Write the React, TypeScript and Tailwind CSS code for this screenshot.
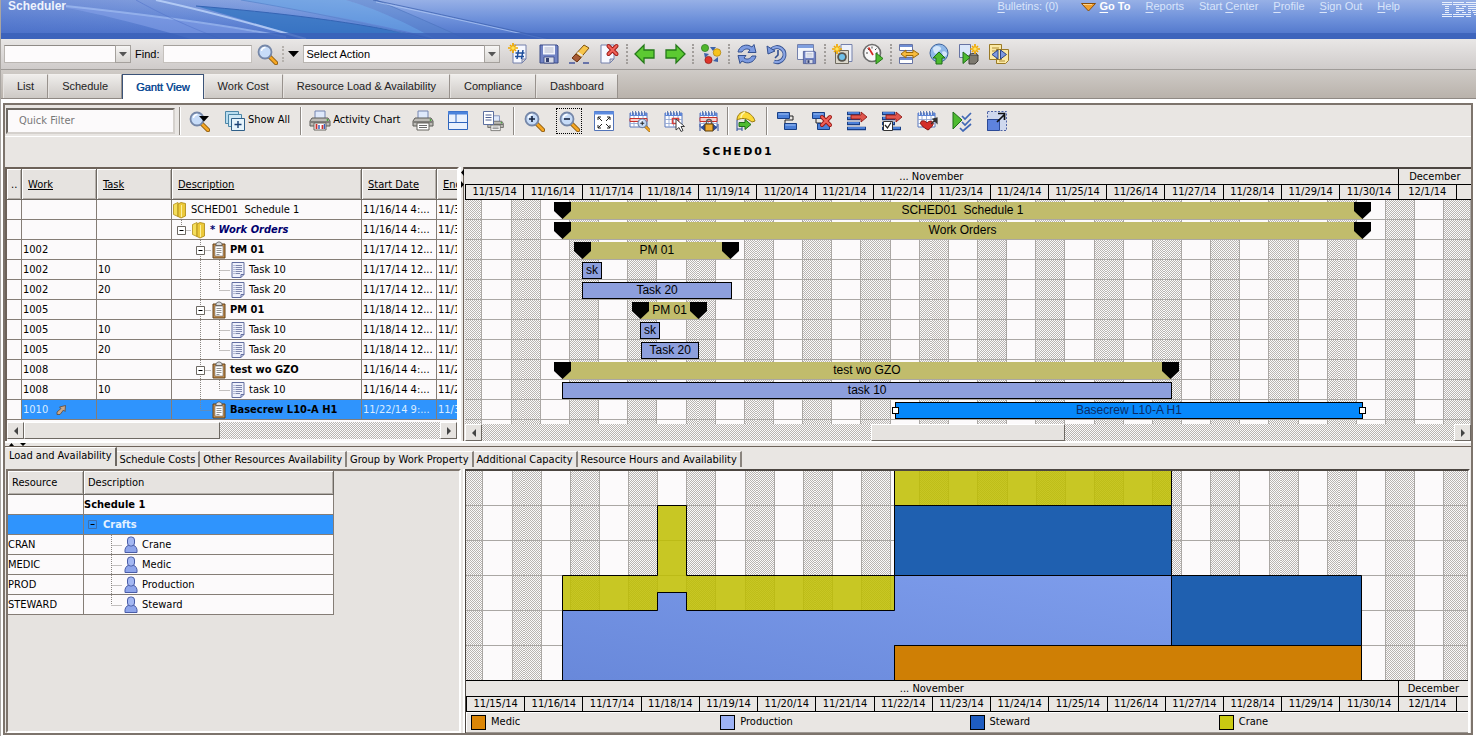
import type { ReactNode } from 'react'

const ui = "font-['DejaVu_Sans_Condensed','DejaVu_Sans',sans-serif]"
const arial = "font-['Liberation_Sans',Arial,sans-serif]"
const hatch = 'bg-[conic-gradient(#b9b5b1_25%,#fbfafb_0_50%,#b9b5b1_0_75%,#fbfafb_0)] bg-[length:2px_2px]'

/* ---------- icon parts ---------- */

const Lens = ({ x = 0, y = 0 }: { x?: number; y?: number }) => (
  <g transform={`translate(${x} ${y})`}>
    <path d="M12 12l7 7" stroke="#8a5a10" strokeWidth="4.5" strokeLinecap="round" />
    <path d="M13 13l6 6" stroke="#f5a623" strokeWidth="2.6" strokeLinecap="round" />
    <circle cx="8" cy="8" r="6.5" fill="#c7dcf8" stroke="#7587a8" strokeWidth="1.8" />
    <path d="M4.500 7a4 4 0 0 1 4-3.500" stroke="#fff" strokeWidth="1.3" fill="none" />
  </g>
)

const Page = ({ x = 5, y = 2, w = 13, h = 18 }: { x?: number; y?: number; w?: number; h?: number }) => (
  <path
    d={`M${x} ${y}h${w}v${h - 4}l-4 4h${-(w - 4)}z M${x + w} ${y + h - 4}h-4v4`}
    fill="#f6f8ff"
    stroke="#7480ab"
  />
)

const Spark = ({ x, y }: { x: number; y: number }) => (
  <g transform={`translate(${x} ${y})`}>
    <path d="M0-5v10M-5 0h10M-3-3l6 6M3-3l-6 6" stroke="#f0a800" strokeWidth="1.7" />
    <circle r="1.800" fill="#ffe45c" />
  </g>
)

const Floppy = () => (
  <>
    <path d="M2 2h17l1 1v17H2z" fill="#7183c4" stroke="#3b4a86" />
    <path d="M5 2.500h12v9H5z" fill="#f4f6fd" />
    <path d="M6.500 5h9M6.500 7h9M6.500 9h9" stroke="#b4b9cc" />
    <path d="M6 14h10v6H6z" fill="#d8dbe6" stroke="#3b4a86" strokeWidth=".8" />
    <path d="M8 15h3v4H8z" fill="#33406f" />
  </>
)

const Cal = () => (
  <>
    <path d="M2 3h17v14H2z" fill="#fff" stroke="#5b79bd" />
    <path d="M2 3h17v3H2z" fill="#5e86d8" />
    <path d="M4 1v4M7 1v4M10 1v4M13 1v4M16 1v4" stroke="#fff" strokeWidth="1.500" />
    <path d="M4.500 1v4M7.500 1v4M10.500 1v4M13.500 1v4M16.500 1v4" stroke="#3f5f9f" strokeWidth=".8" />
    <path d="M2 9.500h17M2 13.500h17M6 6v11M10.500 6v11M15 6v11" stroke="#94a8d4" strokeWidth=".9" />
  </>
)

const Printer = ({ tray }: { tray?: ReactNode }) => (
  <>
    <path d="M6 1h10v8H6z" fill="#dfe9fb" stroke="#7585b0" />
    <path d="M3 8h16l2 3v5H1v-5z" fill="#bdbbb6" stroke="#5d5c59" />
    <path d="M1.500 12h19" stroke="#6c6b67" strokeWidth="1.500" />
    <circle cx="18.500" cy="10" r=".9" fill="#3faa32" />
    <path d="M5 13h12v7H5z" fill="#fff" stroke="#66645f" />
    {tray ?? <path d="M7 15.500h8M7 17.500h8" stroke="#6b6b6b" />}
  </>
)

const RedX = ({ x, y }: { x: number; y: number }) => (
  <g transform={`translate(${x} ${y})`} strokeLinecap="round">
    <path d="M-4-4l8 8M4-4l-8 8" stroke="#9c1712" strokeWidth="4" />
    <path d="M-4-4l8 8M4-4l-8 8" stroke="#f0625a" strokeWidth="2.200" />
  </g>
)

const Bars = () => (
  <>
    <path d="M1 3.500h13M1 8.500h13M1 13.500h13M1 18.500h19" stroke="#183f85" strokeWidth="3.600" />
    <path d="M2 3h11M2 8h11M2 13h11M2 18h17" stroke="#4b80d8" strokeWidth="1.800" />
  </>
)

const RedArrow = () => (
  <path d="M5 5h10V2l6 5-6 5V9H5z" fill="#e0564d" stroke="#8e1a16" strokeWidth=".9" />
)

const icons: Record<string, ReactNode> = {
  search: <Lens x={1} y={1} />,
  newRecord: (
    <>
      <Page x={5} />
      <path d="M10.500 7l-1.500 9M15 7l-1.500 9M7.500 10h9M7 13.500h9" stroke="#1d4e9c" strokeWidth="1.500" />
      <Spark x={5} y={5} />
    </>
  ),
  save: <Floppy />,
  clear: (
    <>
      <path d="M1 20h6M15 20h6" stroke="#44549c" strokeWidth="1.500" />
      <path d="M5 14L16 2l5 3L10 18z" fill="#f7c54a" stroke="#7d5312" />
      <path d="M8 11l5 3.500-4 4.500-5-4z" fill="#a75b35" stroke="#6b3113" />
      <path d="M9.500 9.500l5 3.500" stroke="#e9e6e2" strokeWidth="2" />
    </>
  ),
  remove: (
    <>
      <Page x={3} />
      <RedX x={14.5} y={7} />
    </>
  ),
  prev: <path d="M1 11l9-9v5h10v8H10v5z" fill="#5cc932" stroke="#25791a" strokeWidth="1.300" />,
  next: <path d="M21 11l-9-9v5H2v8h10v5z" fill="#5cc932" stroke="#25791a" strokeWidth="1.300" />,
  workflow: (
    <>
      <path d="M10 4h6l-3 4zM4 10l5 1-4 4zM13 18l5-4v5z" fill="#3d62a8" />
      <circle cx="5" cy="5" r="3.600" fill="#50b52c" stroke="#2a7a1c" strokeWidth=".7" />
      <circle cx="17" cy="9.500" r="3.800" fill="#f6c21c" stroke="#a97e0a" strokeWidth=".7" />
      <circle cx="8.500" cy="17" r="3.600" fill="#dd352b" stroke="#8d1611" strokeWidth=".7" />
    </>
  ),
  refresh: (
    <>
      <path d="M2 9C3 4 8 1 13 2.500l3 1.500 2-2.500 2 8h-8l2-2.500c-3-2-6-1-8 2z" fill="#7d9be0" stroke="#34508f" />
      <path d="M20 13c-1 5-6 8-11 6.500L6 18l-2 2.500-2-8h8L8 15c3 2 6 1 8-2z" fill="#7d9be0" stroke="#34508f" />
    </>
  ),
  history: (
    <>
      <path d="M5.500 6.500A7.500 7.500 0 1 1 8 18.500" fill="none" stroke="#34508f" strokeWidth="4" />
      <path d="M5.500 6.500A7.500 7.500 0 1 1 8 18.500" fill="none" stroke="#8aa5e4" strokeWidth="2.200" />
      <path d="M1 3l1 8 7-3z" fill="#7d9be0" stroke="#34508f" />
      <path d="M12 7v5l-3 3" fill="none" stroke="#34508f" strokeWidth="1.600" />
    </>
  ),
  saveQuery: (
    <>
      <path d="M1.500 1.500h16v15h-16z" fill="#f2f5fc" stroke="#7480ab" />
      <path d="M2 2h15v3H2z" fill="#7f9fdf" />
      <g transform="translate(6 7) scale(.68)">
        <Floppy />
      </g>
    </>
  ),
  camera: (
    <>
      <path d="M9 1.500h11v17H9z" fill="#eef1fa" stroke="#7480ab" />
      <path d="M3.500 7.500h13v13h-13z" fill="#dcd8cc" stroke="#6f6b60" />
      <circle cx="10" cy="14" r="4.800" fill="#55534d" />
      <circle cx="10" cy="14" r="3" fill="#6fc1ea" />
      <Spark x={5} y={6} />
    </>
  ),
  gauge: (
    <>
      <circle cx="10" cy="10" r="8.500" fill="#f8f8f8" stroke="#6d6d6d" strokeWidth="1.700" />
      <path d="M4 10h2M10 3.500v2M14 10h2M5.500 5.500L7 7M14.500 5.500L13 7" stroke="#444" />
      <path d="M6.500 4.500L11 12" stroke="#d02a22" strokeWidth="1.700" />
      <path d="M14 10l7 5.500-7 5.500z" fill="#4ebb30" stroke="#25791a" />
    </>
  ),
  route: (
    <>
      <path d="M1.500 1.500h13v6h-13zM1.500 14.500h13v6h-13z" fill="#fff" stroke="#6673a3" />
      <path d="M2 3h12M2 16h12" stroke="#6f8ed4" strokeWidth="2" />
      <path d="M3 11l5-4v2.500h7V7l6 4-6 4v-2.500H8V15z" fill="#f8bb3c" stroke="#9c6a0a" />
    </>
  ),
  globe: (
    <>
      <circle cx="11" cy="10" r="9" fill="#8fb8e8" stroke="#3d639d" />
      <path d="M5 5c3-3 7-2 8 0s-3 3-4 5-4 0-4-5zM14 9c2-2 5 0 5 2s-3 3-4 2z" fill="#d5e7fa" />
      <path d="M11 9l6 6h-3v6H8v-6H5z" fill="#4ebb30" stroke="#1f6f18" />
    </>
  ),
  newAsset: (
    <>
      <path d="M1.500 1.500h11v13h-11z" fill="#dbe7fa" stroke="#6673a3" />
      <path d="M11 12h9v6l-3 3h-6z" fill="#7d7970" stroke="#45423c" />
      <path d="M12 11l6-1 2 3" fill="none" stroke="#45423c" />
      <path d="M5 9l7 5.500-7 6z" fill="#4ebb30" stroke="#1f6f18" />
      <Spark x={17} y={6} />
    </>
  ),
  compare: (
    <>
      <path d="M1.500 1.500h12v15h-12zM8.500 6.500h12v11l-3 3h-9z" fill="#fbe9a4" stroke="#9a7a26" />
      <path d="M4 5h7M4 8h4M11 18h6" stroke="#b18f37" />
      <path d="M10 7v9l-6-4.500zM12.500 7v9l6-4.500z" fill="#7f9be0" stroke="#2c4687" />
    </>
  ),
  filter: (
    <>
      <Lens x={1} y={1} />
      <path d="M11 6h10l-5 5.500z" fill="#000" />
    </>
  ),
  showAll: (
    <>
      <path d="M1.500 1.500h13v12h-13z" fill="#b8dcee" stroke="#4c87a8" />
      <path d="M4.500 4.500h13v12h-13z" fill="#cfe8f5" stroke="#4c87a8" />
      <path d="M7.500 8.500h13v12h-13z" fill="#e5f3fb" stroke="#2f5f88" />
      <path d="M14 11v7M10.500 14.500h7" stroke="#173f74" strokeWidth="1.400" />
    </>
  ),
  activity: (
    <Printer
      tray={
        <>
          <path d="M7.500 14v5M13.500 15v4" stroke="#d0302a" strokeWidth="1.800" />
          <path d="M10 15v4M15.500 14v5" stroke="#3d62b8" strokeWidth="1.500" />
        </>
      }
    />
  ),
  print: <Printer />,
  layout: (
    <>
      <path d="M1.500 1.500h19v18h-19z" fill="#e9f1fd" stroke="#2f65bd" />
      <path d="M1 3h20" stroke="#4a83dc" strokeWidth="3" />
      <path d="M9 4v8M2 12.500h19" stroke="#2f65bd" />
    </>
  ),
  printAll: (
    <>
      <g transform="translate(5 5) scale(.78)">
        <Printer />
      </g>
      <path d="M1.500 1.500h10v13h-10z" fill="#fff" stroke="#5c6f9f" />
      <path d="M3.500 5h6M3.500 7.500h6M3.500 10h6" stroke="#4d5f92" />
    </>
  ),
  zoomIn: (
    <>
      <Lens x={1} y={1} />
      <path d="M9 6v6M6 9h6" stroke="#16243f" strokeWidth="1.600" />
    </>
  ),
  zoomOut: (
    <>
      <Lens x={1} y={1} />
      <path d="M6 9h6" stroke="#16243f" strokeWidth="1.600" />
    </>
  ),
  fit: (
    <>
      <path d="M1.500 1.500h19v19h-19z" fill="#fff" stroke="#5274b9" />
      <path d="M1 3h20" stroke="#5c8be0" strokeWidth="3" />
      <path d="M5 10V7h3M5 7l4 4M17 10V7h-3M17 7l-4 4M5 15v3h3M5 18l4-4M17 15v3h-3M17 18l-4-4" fill="none" stroke="#222" />
    </>
  ),
  calZoom: (
    <>
      <Cal />
      <path d="M2 8.500h17v3H2z" fill="#f6cfcb" stroke="#c7302a" />
      <g transform="translate(9 8) scale(.66)">
        <Lens />
        <path d="M8 5v6M5 8h6" stroke="#222" strokeWidth="1.500" />
      </g>
    </>
  ),
  calPointer: (
    <>
      <Cal />
      <path d="M9.500 8.500h6v5h-6z" fill="none" stroke="#d8403a" strokeWidth="1.600" />
      <path d="M13 9v11l3-2.500 2 4 2-1-2-4h3.500z" fill="#fff" stroke="#3d3d3d" />
    </>
  ),
  calLock: (
    <>
      <Cal />
      <path d="M2 7.500h17v4H2z" fill="#f6cfcb" stroke="#c7302a" />
      <path d="M2 14v7M20 14v7M3 17.500l4-3v6zM19 17.500l-4-3v6z" fill="#2d4d9a" stroke="#2d4d9a" />
      <path d="M8.500 14v-2a2.500 2.500 0 0 1 5 0v2" fill="none" stroke="#5f5f5f" strokeWidth="1.500" />
      <path d="M7 14h8v7H7z" fill="#eeaa33" stroke="#5c3c08" />
    </>
  ),
  crew: (
    <>
      <path d="M2 10C2 4 7 1 11 2s8 5 9 9l-3 1-3-2c-4-2-8-2-12 0z" fill="#fbd938" stroke="#9a7a10" />
      <path d="M6 8c0-3 2-5 4-6" stroke="#fff4a8" strokeWidth="1.500" fill="none" />
      <path d="M2 10v11M7 16v5M2 19h5" stroke="#2d4d9a" />
      <path d="M4 12.500h6V9.500l6 5-6 5v-3H4z" fill="#4ebb30" stroke="#1f6f18" />
    </>
  ),
  link: (
    <>
      <path d="M13 6h4v4H9v4" fill="none" stroke="#222" />
      <path d="M1.500 2.500h12v6h-12zM8.500 13.500h12v6h-12z" fill="#4b80d8" stroke="#183f85" />
      <path d="M2.500 4h10M9.500 15h10" stroke="#9fc0f5" />
    </>
  ),
  unlink: (
    <>
      <path d="M5 9v4h5" fill="none" stroke="#222" />
      <path d="M1.500 2.500h12v6h-12zM6.500 13.500h12v6h-12z" fill="#4b80d8" stroke="#183f85" />
      <path d="M2.500 4h10" stroke="#9fc0f5" />
      <RedX x={15} y={11} />
    </>
  ),
  level: (
    <>
      <Bars />
      <RedArrow />
    </>
  ),
  levelCheck: (
    <>
      <Bars />
      <RedArrow />
      <path d="M2.500 11.500h9v9h-9z" fill="#fff" stroke="#333" />
      <path d="M4 15l2.500 3 3.500-5.500" fill="none" stroke="#222" strokeWidth="1.300" />
    </>
  ),
  calHeart: (
    <>
      <Cal />
      <path d="M12 20c-5-3-9-6-7-8.500 2-1.500 5-.5 6 1.500 1-2 5-2.500 6-.5s-2 5.500-5 7.500z" fill="#d42e28" stroke="#7f110e" />
      <path d="M15 14l4-4M17 9l4-1v5z" fill="#333" stroke="#333" strokeWidth="1.200" />
    </>
  ),
  commit: (
    <>
      <path d="M2 2l9 8-9 9z" fill="#4ebb30" stroke="#1f6f18" />
      <path d="M11 6l3 3 6-6M11 12l3 3 6-6M9 18l3 3 8-7" fill="none" stroke="#3f67b5" strokeWidth="1.700" />
    </>
  ),
  expand: (
    <>
      <path d="M1.500 1.500h19v19h-19z" fill="#cfd8ee" stroke="#4f63a4" strokeDasharray="2 1.500" />
      <path d="M1.500 9.500h12v11h-12z" fill="#5e83dd" stroke="#2c4a97" />
      <path d="M11 12l8-8M12 3.500h6.500V10" fill="none" stroke="#111" strokeWidth="1.700" />
    </>
  ),
}

const Icon = ({ name }: { name: string }) => (
  <svg viewBox="0 0 22 22" className="size-[22px] shrink-0" fill="none" aria-hidden="true">
    {icons[name]}
  </svg>
)

/* tree icons, 14px wide */
const TreeIcon = ({ kind }: { kind: string }) => (
  <svg viewBox="0 0 14 18" className="h-[18px] w-3.5 shrink-0" fill="none" aria-hidden="true">
    {kind === 'folder' && (
      <>
        <path d="M.5 3.500L5 1.500v14l-4.500-2z" fill="#f5de5a" stroke="#b28f18" strokeWidth=".8" />
        <path d="M5 3l3-1.500 4.500 1V15L8 17l-3-1.500z" fill="#ecc93a" stroke="#a9850f" strokeWidth=".8" />
        <path d="M8.500 4v12" stroke="#fbf0a0" />
      </>
    )}
    {kind === 'clip' && (
      <>
        <path d="M1 3h12v14H1z" fill="#c58d4d" stroke="#63421a" />
        <path d="M3 5h8v10l-1.500 0H3z" fill="#fff" stroke="#666" strokeWidth=".6" />
        <path d="M4.500 7.500h5M4.500 9.500h5M4.500 11.500h5M4.500 13.500h3" stroke="#777" strokeWidth=".8" />
        <path d="M4 4.500V2.500l2-1.500h2l2 1.500v2z" fill="#dadada" stroke="#555" strokeWidth=".8" />
      </>
    )}
    {kind === 'doc' && (
      <>
        <path d="M1 1.500h12v12l-3 3H1z" fill="#eef0fb" stroke="#616c9f" />
        <path d="M4.500 4.500H11M4.500 6.500H11M4.500 8.500H11M4.500 10.500H11M4.500 12.500H9" stroke="#7d86ad" />
        <path d="M2.500 4.500h1M2.500 6.500h1M2.500 8.500h1M2.500 10.500h1M2.500 12.500h1" stroke="#7d86ad" />
        <path d="M13 13.500h-3v3" stroke="#616c9f" />
      </>
    )}
    {kind === 'person' && (
      <>
        <path d="M1 16.500c-.5-4 1-6.500 4-7.500h4c3 1 4.500 3.500 4 7.500z" fill="#8fa5ea" stroke="#4a5da8" />
        <rect x="3.500" y="1" width="7" height="9" rx="3" fill="#a4b7f2" stroke="#4a5da8" />
      </>
    )}
  </svg>
)

type Branch = { level: number; toggle?: boolean; last?: boolean }

/* dotted guide lines and the [-] box in front of a tree row */
function Guide({ level, toggle, last }: Branch) {
  if (level === 0) return null
  const width = [0, 19, 39, 58][level]
  const x = [0, 8, 27, 46][level] + 0.5
  return (
    <svg width={width} height="20" viewBox={`0 0 ${width} 20`} fill="none" className="shrink-0" aria-hidden="true">
      <g stroke="#8a8682" strokeDasharray="1 1">
        {level === 3 && <path d="M27.500 0v20" />}
        <path d={`M${x} 0v${last ? 10 : 20}`} />
        <path d={`M${x} 10.500H${width - 1}`} />
      </g>
      {toggle && (
        <>
          <path d={`M${x - 4} 6.500h8v8h-8z`} fill="#fff" stroke="#6d6862" />
          <path d={`M${x - 2} 10.500h4`} stroke="#000" />
        </>
      )}
    </svg>
  )
}

/* ---------- data ---------- */

type Row = Branch & {
  work: string
  task: string
  icon: string
  text: string
  style?: string
  start: string
  finish: string
  selected?: boolean
  bar: { kind: 'summary' | 'task' | 'selected'; from: number; to: number; label: string }
}

// bar.from / bar.to are days counted from 11/15
const rows: Row[] = [
  { level: 0, work: '', task: '', icon: 'folder', text: 'SCHED01\u00a0 Schedule 1', start: '11/16/14 4:...', finish: '11/3', bar: { kind: 'summary', from: 1.67, to: 15.4, label: 'SCHED01\u00a0 Schedule 1' } },
  { level: 1, toggle: true, last: true, work: '', task: '', icon: 'folder', text: '* Work Orders', style: 'font-bold italic text-[#00006e]', start: '11/16/14 4:...', finish: '11/3', bar: { kind: 'summary', from: 1.67, to: 15.4, label: 'Work Orders' } },
  { level: 2, toggle: true, work: '1002', task: '', icon: 'clip', text: 'PM 01', style: 'font-bold', start: '11/17/14 12...', finish: '11/1', bar: { kind: 'summary', from: 2.01, to: 4.57, label: 'PM 01' } },
  { level: 3, work: '1002', task: '10', icon: 'doc', text: 'Task 10', start: '11/17/14 12...', finish: '11/1', bar: { kind: 'task', from: 2.01, to: 2.35, label: 'sk' } },
  { level: 3, last: true, work: '1002', task: '20', icon: 'doc', text: 'Task 20', start: '11/17/14 12...', finish: '11/1', bar: { kind: 'task', from: 2.01, to: 4.58, label: 'Task 20' } },
  { level: 2, toggle: true, work: '1005', task: '', icon: 'clip', text: 'PM 01', style: 'font-bold', start: '11/18/14 12...', finish: '11/1', bar: { kind: 'summary', from: 3.01, to: 4.01, label: 'PM 01' } },
  { level: 3, work: '1005', task: '10', icon: 'doc', text: 'Task 10', start: '11/18/14 12...', finish: '11/1', bar: { kind: 'task', from: 3.01, to: 3.34, label: 'sk' } },
  { level: 3, last: true, work: '1005', task: '20', icon: 'doc', text: 'Task 20', start: '11/18/14 12...', finish: '11/1', bar: { kind: 'task', from: 3.02, to: 4.02, label: 'Task 20' } },
  { level: 2, toggle: true, work: '1008', task: '', icon: 'clip', text: 'test wo GZO', style: 'font-bold', start: '11/16/14 4:...', finish: '11/2', bar: { kind: 'summary', from: 1.67, to: 12.12, label: 'test wo GZO' } },
  { level: 3, last: true, work: '1008', task: '10', icon: 'doc', text: 'task 10', start: '11/16/14 4:...', finish: '11/2', bar: { kind: 'task', from: 1.67, to: 12.13, label: 'task 10' } },
  { level: 2, last: true, work: '1010', task: '', icon: 'clip', text: 'Basecrew L10-A H1', style: 'font-bold text-black', start: '11/22/14 9:...', finish: '11/3', selected: true, bar: { kind: 'selected', from: 7.37, to: 15.41, label: 'Basecrew L10-A H1' } },
]

const days = [
  '11/15/14', '11/16/14', '11/17/14', '11/18/14', '11/19/14', '11/20/14', '11/21/14', '11/22/14', '11/23/14',
  '11/24/14', '11/25/14', '11/26/14', '11/27/14', '11/28/14', '11/29/14', '11/30/14', '12/1/14', '',
]

const visibleDays = 1001 / 58
const dayCols = 'grid grid-cols-[repeat(17,58fr)_15fr]'
const loadDayCols = 'grid grid-cols-[repeat(17,58fr)_12fr]'

const crafts = [
  ['CRAN', 'Crane'],
  ['MEDIC', 'Medic'],
  ['PROD', 'Production'],
  ['STEWARD', 'Steward'],
]

const legend = [
  { name: 'Medic', color: 'bg-[#dc8606]' },
  { name: 'Production', color: 'bg-[#9db2f5]' },
  { name: 'Steward', color: 'bg-[#1e5cc0]' },
  { name: 'Crane', color: 'bg-[#caca12]' },
]

const actionGroups = [
  ['newRecord', 'save', 'clear', 'remove'],
  ['prev', 'next'],
  ['workflow'],
  ['refresh', 'history', 'saveQuery'],
  ['camera', 'gauge'],
  ['route', 'globe', 'newAsset', 'compare'],
]

/* ---------- header ---------- */

const Key = ({ children }: { children: ReactNode }) => <span className="underline underline-offset-2">{children}</span>

function Header() {
  return (
    <header className="relative h-[39px] overflow-hidden bg-linear-to-b from-[#97b0e6] via-[#6d90da] to-[#4a70c8]">
      <svg className="absolute inset-y-0 left-0 h-full w-[560px]" viewBox="0 0 560 39" fill="none" aria-hidden="true">
        <defs>
          <linearGradient id="fade" x1="0" x2="1">
            <stop offset="0" stopColor="#4468c4" />
            <stop offset="1" stopColor="#4468c4" stopOpacity="0" />
          </linearGradient>
        </defs>
        <path d="M0 0h400v39H0z" fill="url(#fade)" opacity=".45" />
        <path d="M65 6C140 14 225 26 290 39H190C140 24 90 12 65 8z" fill="#86a3ea" opacity=".55" />
        <path d="M195 6C270 12 360 22 430 39H305C270 28 230 16 195 6z" fill="#2e72bf" opacity=".7" />
        <path d="M240 0H345C385 12 410 26 435 39 380 24 310 12 240 0z" fill="#66a3e4" opacity=".6" />
        <path d="M345 0h30c30 12 60 26 90 39h-30C410 26 385 12 345 0z" fill="#5783cc" opacity=".5" />
        <path d="M65 6C140 14 225 25 285 37" stroke="#a3bdf2" strokeWidth="2" opacity=".7" />
        <path d="M155 0C210 12 260 26 305 39" stroke="#bfd6fa" strokeWidth="2" opacity=".8" />
        <path d="M195 6C270 12 360 22 430 39" stroke="#3464b4" />
        <path d="M240 0C300 10 380 26 425 39" stroke="#5583cc" opacity=".7" />
        <path d="M135 0C160 14 190 28 220 39" stroke="#5577cc" opacity=".6" />
        <path d="M375 0C410 14 440 28 465 39" stroke="#4a72bc" opacity=".6" />
        <path d="M372 0C430 12 500 28 550 39" stroke="#3c60ac" opacity=".7" />
        <path d="M375 2C432 14 500 29 548 40" stroke="#b6cdf6" opacity=".7" />
      </svg>
      <div className="absolute inset-x-0 bottom-0 h-1.5 bg-[#3a60b8]/80" />
      <div className={`relative flex items-start justify-between pl-[7px] text-[11px] leading-[13px] text-[#d9e4fa] ${arial}`}>
        <h1 className="text-xs leading-[13px] font-bold text-[#eef3fd]">Scheduler</h1>
        <nav className="flex items-start">
          <a href="#bulletins" className="mr-[22px]"><Key>B</Key>ulletins: (0)</a>
          <a href="#goto" className="mr-[15px] flex gap-1 font-bold text-white">
            <svg width="15" height="13" viewBox="0 0 15 13" aria-hidden="true">
              <path d="M.5 3.500h14L7.500 11z" fill="#f0a030" stroke="#8a4d08" />
              <path d="M2 4.500h9" stroke="#fbd28c" />
            </svg>
            <span><Key>G</Key>o To</span>
          </a>
          <a href="#reports" className="mr-[15px]"><Key>R</Key>eports</a>
          <a href="#start" className="mr-[15px]">Start <Key>C</Key>enter</a>
          <a href="#profile" className="mr-[15px]"><Key>P</Key>rofile</a>
          <a href="#signout" className="mr-[15px]"><Key>S</Key>ign Out</a>
          <a href="#help" className="mr-[42px]"><Key>H</Key>elp</a>
          {/* eight-bar logo, cut by the window edge */}
          <svg width="34" height="18" viewBox="0 0 34 18" aria-label="IBM" role="img">
            <path
              d="M0 2.500h10M11 2.500h11M24 2.500h10M0 4.500h10M11 4.500h13M24 4.500h10M3 6.500h4M14 6.500h3M20 6.500h4M26 6.500h8M3 8.500h4M14 8.500h8M26 8.500h8M3 10.500h4M14 10.500h8M26 10.500h3M30 10.500h4M3 12.500h4M14 12.500h3M20 12.500h4M26 12.500h3M31 12.500h3M0 14.500h10M11 14.500h13M24 14.500h5M32 14.500h2M0 16.500h10M11 16.500h11M24 16.500h5"
              stroke="#e8effc"
            />
          </svg>
        </nav>
      </div>
    </header>
  )
}

const DropArrow = () => (
  <span className="pointer-events-none absolute inset-y-0 right-0 flex w-4 items-center justify-center border border-[#a5a19d] bg-linear-to-b from-[#f7f6f5] to-[#d8d5d2]">
    <svg width="8" height="5" viewBox="0 0 8 5" aria-hidden="true"><path d="M0 0h8L4 4.500z" fill="#555" /></svg>
  </span>
)

const selectClass =
  'h-[18px] w-full appearance-none border border-[#b9b5b1] border-t-[#8f8b87] bg-[#fdfbfc] px-[2px] text-[11px] text-black'

function ActionBar() {
  return (
    <div className={`flex h-[31px] items-center border-b border-[#9f9b98] bg-linear-to-b from-[#e9e7e6] to-[#cfcbca] pl-[3px] text-[11px] ${arial}`}>
      <div className="relative w-[127px]">
        <select aria-label="Saved query" className={selectClass}><option /></select>
        <DropArrow />
      </div>
      <label htmlFor="find" className="mx-1">Find:</label>
      <input id="find" className="h-[18px] w-[89px] border border-[#c5c1bd] border-t-[#a5a19d] bg-[#fdfbfc] px-1" />
      <button aria-label="Search" className="ml-1"><Icon name="search" /></button>
      <span className="mx-1 h-4 border-l-2 border-dotted border-[#b5b1ad]" />
      <svg width="11" height="6" viewBox="0 0 11 6" className="mr-1" aria-hidden="true"><path d="M0 0h11L5.500 6z" /></svg>
      <div className="relative mr-2 w-[197px]">
        <select aria-label="Select action" className={selectClass}><option>Select Action</option></select>
        <DropArrow />
      </div>
      {actionGroups.map((group, i) => (
        <div key={group[0]} className="flex items-center">
          {i > 0 && <span className="mx-1.5 h-5 border-l-2 border-dotted border-[#a29e9b]" />}
          <div className="flex gap-2">
            {group.map(name => (
              <button key={name} aria-label={name}><Icon name={name} /></button>
            ))}
          </div>
        </div>
      ))}
    </div>
  )
}

const mainTabs = ['List', 'Schedule', 'Gantt View', 'Work Cost', 'Resource Load & Availability', 'Compliance', 'Dashboard']

function MainTabs() {
  return (
    <div role="tablist" className={`flex h-[29px] items-end border-b border-[#8f8984] bg-linear-to-b from-[#cfcbc7] to-[#b9b2ab] pl-0.5 text-[11px] ${arial}`}>
      {mainTabs.map(tab => {
        const active = tab === 'Gantt View'
        return (
          <button
            key={tab}
            role="tab"
            aria-selected={active}
            className={`h-6 border border-b-0 px-[13px] ${
              active
                ? '-mb-px h-[25px] border-[#3b5378] bg-white text-[#0d4a94] [text-shadow:0.4px_0_#0d4a94]'
                : 'border-[#98928d] border-t-[#f2f0ee] border-l-[#e6e3e0] bg-linear-to-b from-[#efedeb] to-[#cdc9c5] text-[#222]'
            }`}
          >
            {tab}
          </button>
        )
      })}
    </div>
  )
}

/* ---------- gantt toolbar ---------- */

const ToolSep = ({ className }: { className: string }) => (
  <span className={`h-7 border-l border-[#8f8a85] shadow-[1px_0_#fff] ${className}`} />
)

const Tools = ({ names }: { names: string[] }) => (
  <div className="flex gap-[13px]">
    {names.map(name => (
      <button key={name} aria-label={name} className={name === 'zoomOut' ? 'outline-1 outline-offset-1 outline-dotted outline-black' : ''}>
        <Icon name={name} />
      </button>
    ))}
  </div>
)

function GanttToolbar() {
  return (
    <div className="flex h-8 items-center border-b border-white bg-[#e9e6e3] pl-px">
      <input
        aria-label="Quick Filter"
        placeholder="Quick Filter"
        className="h-[26px] w-[169px] border-2 border-[#6d6862] border-r-[#d5d1cd] border-b-[#d5d1cd] bg-[#fcfafb] pl-[11px] placeholder:text-[#777]"
      />
      <ToolSep className="mx-1" />
      <button aria-label="Filter" className="mx-1"><Icon name="filter" /></button>
      <button className="mx-2.5 flex items-center gap-0.5"><Icon name="showAll" />Show All</button>
      <ToolSep className="mr-2" />
      <button className="flex items-center gap-0.5"><Icon name="activity" />Activity Chart</button>
      <span className="w-3" />
      <Tools names={['print', 'layout', 'printAll']} />
      <ToolSep className="mx-[9px]" />
      <Tools names={['zoomIn', 'zoomOut', 'fit', 'calZoom', 'calPointer', 'calLock']} />
      <ToolSep className="mx-[7px]" />
      <Tools names={['crew']} />
      <ToolSep className="mx-[9px]" />
      <Tools names={['link', 'unlink', 'level', 'levelCheck', 'calHeart', 'commit', 'expand']} />
    </div>
  )
}

/* ---------- scroll bars ---------- */

const ScrollButton = ({ dir }: { dir: 'left' | 'right' }) => (
  <button aria-label={`Scroll ${dir}`} className="flex w-[17px] shrink-0 items-center justify-center border border-[#fff] border-r-[#6d6862] border-b-[#6d6862] bg-[#e6e3e0]">
    <svg width="4" height="8" viewBox="0 0 4 8" aria-hidden="true">
      <path d={dir === 'left' ? 'M4 0v8L0 4z' : 'M0 0v8l4-4z'} fill="#444" />
    </svg>
  </button>
)

function ScrollBar({ before, thumb }: { before: string; thumb: string }) {
  return (
    <div className="flex h-[17px]">
      <ScrollButton dir="left" />
      <div className={`flex min-w-0 flex-1 ${hatch}`}>
        <span className={before} />
        <span className={`border border-white border-r-[#6d6862] border-b-[#6d6862] bg-[#e6e3e0] ${thumb}`} />
      </div>
      <ScrollButton dir="right" />
    </div>
  )
}

/* ---------- work order table ---------- */

const headCell =
  'border-r border-b border-[#6d6862] bg-[#e6e3e0] text-left font-normal shadow-[inset_1px_1px_#fff,inset_-1px_-1px_#b5b0ab]'
const cell = 'h-5 overflow-hidden border-r border-b border-[#857d76] p-0 whitespace-nowrap'

function WorkTable() {
  return (
    <section className="flex w-[454px] shrink-0 flex-col border-t-2 border-r-2 border-l-2 border-[#6d6259] border-r-white bg-[#fcfafb]">
      <div className="overflow-hidden">
        <table className="w-[452px] table-fixed border-separate border-spacing-0 leading-[15px]">
          <colgroup>
            <col className="w-[15px]" />
            <col className="w-[75px]" />
            <col className="w-[75px]" />
            <col className="w-[190px]" />
            <col className="w-[75px]" />
            <col className="w-[22px]" />
          </colgroup>
          <thead>
            <tr className="h-[31px]">
              <th className={`${headCell} pl-1`}>..</th>
              {['Work', 'Task', 'Description', 'Start Date', 'End'].map(h => (
                <th key={h} className={`${headCell} overflow-hidden pl-[6px] whitespace-nowrap underline underline-offset-1`}>{h}</th>
              ))}
            </tr>
          </thead>
          <tbody>
            {rows.map((r, i) => (
              <tr key={i} className={r.selected ? 'bg-[#2f94fd] text-[#d9ecff]' : 'bg-[#fcfafb]'}>
                <td className={`${cell} bg-[#fcfafb]`} />
                <td className={`${cell} pl-px`}>
                  <span className="flex items-center gap-2">
                    {r.work}
                    {r.selected && (
                      <svg width="10" height="10" viewBox="0 0 10 10" aria-hidden="true">
                        <path d="M1 7l4-3.500L3.500 2 9.500.5 9 6.500 7.500 5 4 9.500 1 9.500z" fill="#c9a788" stroke="#5d4a3b" strokeWidth=".8" />
                      </svg>
                    )}
                  </span>
                </td>
                <td className={`${cell} pl-px`}>{r.task}</td>
                <td className={cell}>
                  <div className="flex h-[19px] items-center pl-px">
                    <Guide level={r.level} toggle={r.toggle} last={r.last} />
                    <span className="flex items-center gap-1">
                      <TreeIcon kind={r.icon} />
                      <span className={r.style}>{r.text}</span>
                    </span>
                  </div>
                </td>
                <td className={`${cell} pl-px`}>{r.start}</td>
                <td className={`${cell} border-r-0 pl-px`}>{r.finish}</td>
              </tr>
            ))}
          </tbody>
        </table>
      </div>
      <div className="mt-0.5">
        <ScrollBar before="" thumb="w-[196px]" />
      </div>
    </section>
  )
}

/* ---------- time axis ---------- */

function TimeAxis({ cols }: { cols: string }) {
  return (
    <div className="bg-[#e9e6e3] text-center whitespace-nowrap">
      <div className={`${cols} h-4 border-b border-black leading-[15px]`}>
        <div className="col-span-16">... November</div>
        <div className="col-span-2 overflow-hidden border-l border-black">December</div>
      </div>
      <div className={`${cols} h-[15px] border-b border-black leading-[14px]`}>
        {days.map((d, i) => (
          <div key={i} className="border-l border-black">{d}</div>
        ))}
      </div>
    </div>
  )
}

/* off-shift hours are hatched, the shift itself is white */
function Shifts({ cols }: { cols: string }) {
  return (
    <div className={`${cols} absolute inset-0 bg-[#fcfafb]`}>
      {days.map((_, i) => (
        <div key={i} className="flex overflow-hidden">
          <div className={`border-r border-[#aaa7a4] ${i === 17 ? 'w-full' : 'w-[30%]'} ${hatch}`} />
          {i < 17 && <div className="flex-1 border-r border-[#aaa7a4]" />}
          {i < 17 && <div className={`w-1/5 ${hatch}`} />}
        </div>
      ))}
    </div>
  )
}

const Marker = ({ side }: { side: string }) => (
  <svg width="17" height="17" viewBox="0 0 17 17" className={`absolute top-0 ${side}`} aria-hidden="true">
    <path d="M0 0h17v9l-8.500 8L0 9z" />
  </svg>
)

const barStyle = {
  summary: 'bg-[#c1bc6c] leading-4',
  task: 'border border-black bg-[#8d9fdd] leading-[14px]',
  selected: 'border border-black bg-[#0688fb] leading-[14px] text-[#0b2c66]',
}

function Bar({ kind, from, to, label }: Row['bar']) {
  return (
    <div
      className={`absolute top-0.5 flex h-[17px] justify-center text-xs whitespace-nowrap ${arial} ${barStyle[kind]}`}
      style={{ left: `${(from / visibleDays) * 100}%`, width: `${((to - from) / visibleDays) * 100}%` }}
    >
      {label}
      {kind === 'summary' && <Marker side="-left-2" />}
      {kind === 'summary' && <Marker side="-right-2" />}
      {kind === 'selected' && <span className="absolute top-1 -left-1 size-[7px] border border-black bg-white" />}
      {kind === 'selected' && <span className="absolute top-1 -right-1 size-[7px] border border-black bg-white" />}
    </div>
  )
}

function Gantt() {
  return (
    <section className="flex min-w-0 flex-1 flex-col border-t-2 border-[#4c4641] pl-px">
      <TimeAxis cols={dayCols} />
      <div className="relative overflow-hidden pb-1">
        <Shifts cols={dayCols} />
        {rows.map((r, i) => (
          <div key={i} className="relative h-5 border-b border-[#aaa7a4]">
            <Bar {...r.bar} />
          </div>
        ))}
      </div>
      <ScrollBar before="w-[40%]" thumb="w-1/5" />
    </section>
  )
}

/* ---------- lower half ---------- */

const lowerTabs = [
  'Load and Availability',
  'Schedule Costs',
  'Other Resources Availability',
  'Group by Work Property',
  'Additional Capacity',
  'Resource Hours and Availability',
]

function CraftTable() {
  return (
    <section className="w-[455px] shrink-0 border-2 border-[#7d746c] border-r-white border-b-white bg-[#e6e3e0]">
      <table className="w-[326px] table-fixed border-separate border-spacing-0 leading-[15px]">
        <colgroup>
          <col className="w-[76px]" />
          <col className="w-[250px]" />
        </colgroup>
        <thead>
          <tr className="h-6">
            <th className={`${headCell} pl-1`}>Resource</th>
            <th className={`${headCell} pl-1`}>Description</th>
          </tr>
        </thead>
        <tbody className="bg-[#fcfafb]">
          <tr>
            <td className={cell} />
            <td className={`${cell} font-bold`}>Schedule 1</td>
          </tr>
          <tr className="bg-[#2f94fd] font-bold text-[#e3f1ff]">
            <td className={cell} />
            <td className={cell}>
              <div className="flex h-[19px] items-center gap-1.5 pl-1">
                <svg width="9" height="9" viewBox="0 0 9 9" fill="none" aria-hidden="true">
                  <path d="M.5.5h8v8h-8z" stroke="#3d6fae" />
                  <path d="M2.500 4.500h4" stroke="#000" />
                </svg>
                Crafts
              </div>
            </td>
          </tr>
          {crafts.map(([code, name], i) => (
            <tr key={code}>
              <td className={cell}>{code}</td>
              <td className={cell}>
                <div className="flex h-[19px] items-center gap-1">
                  <span className="w-9"><Guide level={2} last={i === crafts.length - 1} /></span>
                  <TreeIcon kind="person" />
                  {name}
                </div>
              </td>
            </tr>
          ))}
        </tbody>
      </table>
    </section>
  )
}

function LoadChart() {
  return (
    <section className="flex min-w-0 flex-1 flex-col border-t-2 border-r-2 border-l border-[#4c4641] border-r-[#fff]">
      <div className="relative h-[209px] overflow-hidden">
        <Shifts cols={loadDayCols} />
        <div className="relative">
          {[1, 2, 3, 4, 5].map(n => (
            <div key={n} className="h-[35px] border-b border-[#aaa7a4]" />
          ))}
        </div>
        <svg className="absolute inset-0 h-full w-full" viewBox="0 0 1002 209" preserveAspectRatio="none" role="img" aria-label="Load by craft">
          <defs>
            <linearGradient id="prod" x1="0" y1="1" x2="1" y2="0">
              <stop offset="0" stopColor="#6888da" />
              <stop offset="1" stopColor="#7e9dec" />
            </linearGradient>
          </defs>
          <g stroke="#000">
            <path d="M96.500 139.500v-35h95v-70h29v70h208v35h-208v-18h-29v18zM428.500-2h277v36.500h-277z" fill="#bfbe00" fillOpacity=".86" />
            <path d="M428.500 34.500h277v70h-277zM705.500 104.500h190v70h-190z" fill="#1f60b0" />
            <path d="M96.500 212v-72.500h95v-18h29v18h208v-35h277v70h-277V212z" fill="url(#prod)" />
            <path d="M428.500 174.500h467V212h-467z" fill="#cf7f05" />
          </g>
        </svg>
      </div>
      <div className="border-t border-black">
        <TimeAxis cols={loadDayCols} />
      </div>
      <ul className="grid h-[21px] grid-cols-4 items-center border-b border-[#9c9792] pl-[5px] shadow-[inset_1px_1px_#fff]">
        {legend.map(item => (
          <li key={item.name} className="flex items-center gap-[5px]">
            <span className={`size-[15px] border border-black ${item.color}`} />
            {item.name}
          </li>
        ))}
      </ul>
    </section>
  )
}

export default function App() {
  return (
    <div className={`w-full overflow-hidden border-l border-[#a9a5a1] bg-white text-[11px] text-black ${ui}`}>
      <Header />
      <ActionBar />
      <MainTabs />
      <main className="mt-1 mr-[3px] mb-px ml-0.5 border-2 border-[#7d746c] bg-[#e9e6e3]">
        <GanttToolbar />
        <h2 className="flex h-[30px] items-center justify-center font-['DejaVu_Sans',sans-serif] text-[11px] font-bold tracking-[2px]">SCHED01</h2>
        <div className="flex">
          <WorkTable />
          <div className="w-[5px] shrink-0 border-r border-l-2 border-r-[#6d6259] border-l-white">
            <svg width="3" height="24" viewBox="0 0 3 24" className="block" aria-hidden="true">
              <path d="M3 2v7L0 5.500zM0 14v7l3-3.500z" />
            </svg>
          </div>
          <Gantt />
        </div>
        <div className="h-[5px] border-t-2 border-white pl-1">
          <svg width="17" height="3" viewBox="0 0 17 3" className="block" aria-hidden="true">
            <path d="M0 3h5L2.500 0zM11 0h6l-3 3z" />
          </svg>
        </div>
        <div role="tablist" className="flex h-[23px] items-start border-t border-[#6d6259] pl-px leading-[15px]">
          {lowerTabs.map((tab, i) => (
            <button
              key={tab}
              role="tab"
              aria-selected={i === 0}
              className={`border-t border-r-2 border-t-white px-[3px] ${
                i === 0 ? 'h-[19px] border-r-[#6d6862] pb-1' : 'mt-1 h-4 border-r-[#8a847e]'
              }`}
            >
              {tab}
            </button>
          ))}
        </div>
        <div className="flex px-px">
          <CraftTable />
          <div className="w-1 shrink-0 border-r-2 border-white" />
          <LoadChart />
        </div>
      </main>
    </div>
  )
}
